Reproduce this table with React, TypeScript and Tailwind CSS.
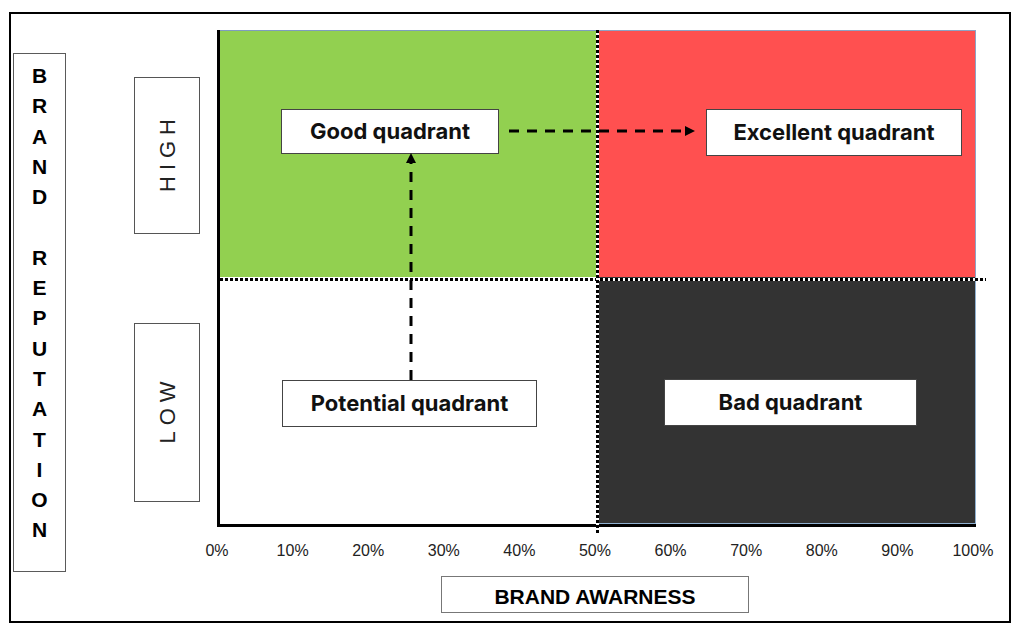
const letters = ["B", "R", "A", "N", "D", "", "R", "E", "P", "U", "T", "A", "T", "I", "O", "N"];
const ticks = ["0%", "10%", "20%", "30%", "40%", "50%", "60%", "70%", "80%", "90%", "100%"];

function Label({ text, className }: { text: string; className: string }) {
  return (
    <div
      className={`flex items-center justify-center bg-white border border-[#444] text-[22px] font-bold text-[#111] ${className}`}
      style={{ fontFamily: "Inter, 'Noto Sans', sans-serif" }}
    >
      {text}
    </div>
  );
}

function Side({ text, className }: { text: string; className: string }) {
  return (
    <div className={`flex items-center justify-center border border-[#555] bg-white ${className}`}>
      <span className="-rotate-90 whitespace-nowrap pl-[6px] text-[22px] tracking-[6px] text-[#222]">{text}</span>
    </div>
  );
}

export default function App() {
  return (
    <div
      className="w-[1024px] h-[633px] overflow-hidden bg-white pt-[12px] text-black"
      style={{ fontFamily: "'Liberation Sans', Arial, sans-serif" }}
    >
      <div className="ml-[9px] flex w-[1002px] h-[611px] border-2 border-black">
        {/* brand reputation */}
        <div className="ml-[2px] mt-[39px] flex w-[53px] h-[519px] flex-col items-center border border-[#5a5a5a] pt-[7px]">
          {letters.map((l, i) => (
            <div key={i} className="h-[30.3px] text-[21px] font-bold leading-[30.3px]">
              {l}
            </div>
          ))}
        </div>

        {/* high / low */}
        <div className="ml-[68px] mt-[63px] flex w-[66px] flex-col">
          <Side text="HIGH" className="h-[157px]" />
          <Side text="LOW" className="mt-[89px] h-[179px]" />
        </div>

        {/* chart */}
        <div className="ml-[17px] mt-[16px] flex flex-col">
          <div className="relative grid w-[759px] h-[497px] grid-cols-2 grid-rows-2 border-l-[3px] border-b-[3px] border-black">
            <div className="bg-[#92d050] border-t border-[#7f9cc0] pl-[61px] pt-[78px]">
              <Label text="Good quadrant" className="w-[218px] h-[45px]" />
            </div>
            <div className="bg-[#ff5050] border-t border-r border-[#8ea2c4] pl-[108px] pt-[78px]">
              <Label text="Excellent quadrant" className="w-[256px] h-[47px]" />
            </div>
            <div className="bg-white pl-[62px] pt-[103px]">
              <Label text="Potential quadrant" className="w-[255px] h-[47px]" />
            </div>
            <div className="bg-[#333333] border-r border-b border-[#8fb0d0] pl-[66px] pt-[102px]">
              <Label text="Bad quadrant" className="w-[253px] h-[47px]" />
            </div>

            {/* dotted dividers */}
            <div className="absolute left-[0px] top-[248px] w-[766px] h-[3px] bg-[repeating-linear-gradient(90deg,#000_0_3px,#fff_3px_5px)]" />
            <div className="absolute left-[376px] top-0 w-[3px] h-[503px] bg-[repeating-linear-gradient(180deg,#000_0_3px,#fff_3px_5px)]" />

            {/* arrows */}
            <svg className="pointer-events-none absolute left-[-3px] top-0" width="780" height="500">
              <line x1="292" y1="101" x2="470" y2="101" stroke="#000" strokeWidth="3" strokeDasharray="10 8" />
              <polygon points="478,101 468,96 468,106" fill="#000" />
              <line x1="194" y1="350" x2="194" y2="131" stroke="#000" strokeWidth="3" strokeDasharray="10 8" />
              <polygon points="194,123 189,133 199,133" fill="#000" />
            </svg>
          </div>

          <div className="-ml-[25px] mt-[12px] flex w-[806px] justify-between">
            {ticks.map((t) => (
              <div key={t} className="w-[50px] text-center text-[16px] leading-[24px] text-[#222]">
                {t}
              </div>
            ))}
          </div>

          <div className="ml-[224px] mt-[13px] flex w-[308px] h-[37px] items-end justify-center border border-[#777] pb-[5px]">
            <span className="text-[21px] font-bold leading-none">BRAND AWARNESS</span>
          </div>
        </div>
      </div>
    </div>
  );
}
